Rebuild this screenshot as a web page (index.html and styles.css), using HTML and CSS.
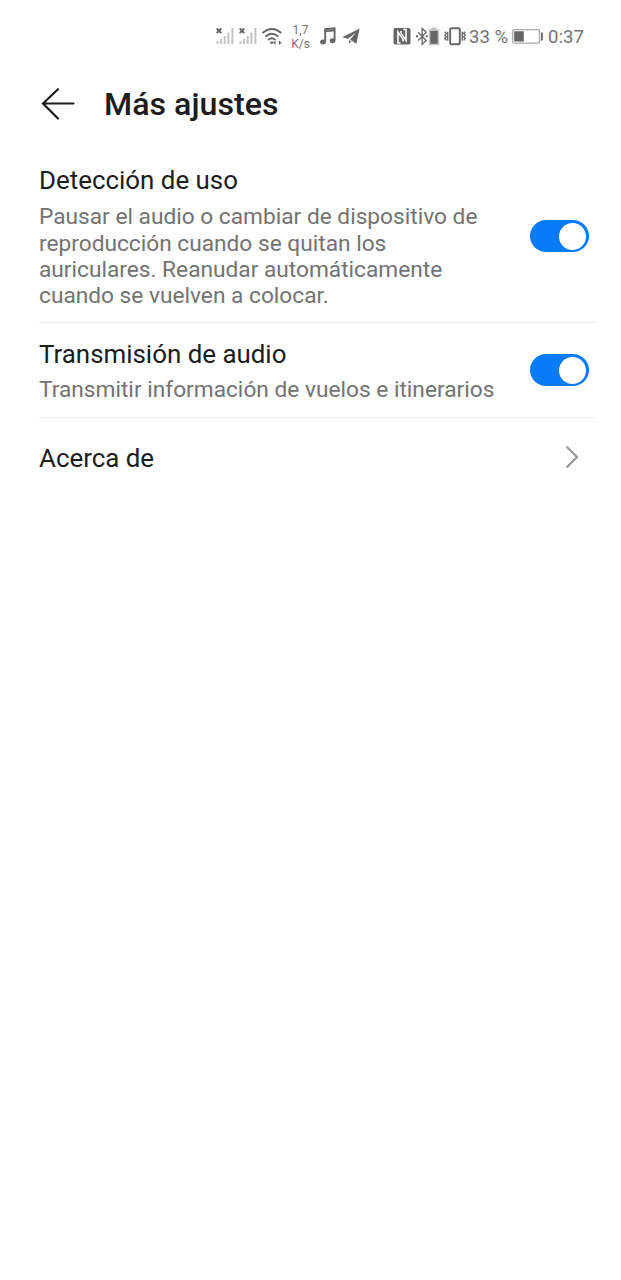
FILE: index.html
```html
<!DOCTYPE html>
<html lang="es">
<head>
  <meta charset="UTF-8">
  <meta name="viewport" content="width=device-width, initial-scale=1.0">
  <title>Más ajustes</title>
  <link rel="stylesheet" href="styles.css">
</head>
<body>
  <div class="status-bar">
    <svg class="signal" width="18" height="20" viewBox="0 0 18 20">
      <path class="cross" d="M0.7 1.5l4.6 4.6M5.3 1.5L0.7 6.1"/>
      <path class="bars" d="M1.5 14v3M5 12v5M8.7 9v8M12.4 5.5V17M16.4 1v16"/>
    </svg>
    <svg class="signal" width="18" height="20" viewBox="0 0 18 20">
      <path class="cross" d="M0.7 1.5l4.6 4.6M5.3 1.5L0.7 6.1"/>
      <path class="bars" d="M1.5 14v3M5 12v5M8.7 9v8M12.4 5.5V17M16.4 1v16"/>
    </svg>
    <svg class="wifi" width="21" height="20" viewBox="0 0 21 20">
      <path class="line" d="M.5 6Q9.8-2.2 19.3 6M3.4 9.6Q9.8 3.8 16.3 9.6M6.2 13Q9.8 9.6 13.5 13"/>
      <path class="fill" d="M7.3 14.8h5L9.8 17.6zM13.6 13.5v4.4l-2-2.2zM17 13.5v4.4l2.5-2.2z"/>
    </svg>
    <div class="speed"><span>1,7</span><span>K/s</span></div>
    <svg class="music" width="16" height="20" viewBox="0 0 16 20">
      <path class="line" d="M5.2 14.5V2.2l9.4-1V13.5M5.2 4.4l9.4-1"/>
      <ellipse class="fill" cx="3" cy="15" rx="2.9" ry="2.5"/>
      <ellipse class="fill" cx="12.5" cy="13.8" rx="2.8" ry="2.5"/>
    </svg>
    <svg class="plane" width="18" height="20" viewBox="0 0 18 20">
      <path class="fill" d="M17.6 1.5L0.3 10.3l5.5 1.5L14 5.7 8 12.4l6.4 4.4zM7 13l2.4 1.5L7 16.6z"/>
    </svg>
    <svg class="nfc" width="18" height="20" viewBox="0 0 18 20">
      <rect class="fill" x=".5" y="1" width="17" height="16.5" rx="1.8"/>
      <path class="gap" d="M7.6 16H5V5l5 7.4v2.2M10.4 2.5H13v11L8 6.1V4"/>
    </svg>
    <svg class="bluetooth" width="24" height="20" viewBox="0 0 24 20">
      <path class="thin" d="M2.2 5.2l8 8.2-4 3.8V1.5l4 3.8-8 8.1"/>
      <path class="fill" d="M0 8.3h2v2H0zM9.8 8.3h2v2h-2z"/>
      <path class="pale" d="M12.8 2.2h2.8V.6h4.8v1.6h2.8v16.1H12.8z"/>
      <path class="fill" d="M14.3 3.9h7.4v12.8h-7.4z"/>
    </svg>
    <svg class="vibrate" width="22" height="20" viewBox="0 0 22 20">
      <rect class="line" x="6.2" y="1.3" width="9.6" height="16" rx="1"/>
      <path class="thin" d="M.8 4.8l1.5 1.6L.8 8.1l1.5 1.7-1.5 1.7 1.5 1.8M3.7 4.8v9M21.2 4.8l-1.5 1.6 1.5 1.7-1.5 1.7 1.5 1.7-1.5 1.8M18.3 4.8v9"/>
    </svg>
    <span class="percent">33 %</span>
    <svg class="battery" width="31" height="20" viewBox="0 0 31 20">
      <rect class="outline" x=".7" y="2.6" width="26.8" height="13.6" rx="1.6"/>
      <path class="fill" d="M2.2 4.2h9.6v10.4H2.2zM29 5.4h1.8v8H29z"/>
    </svg>
    <span class="clock">0:37</span>
  </div>

  <div class="header">
    <svg width="34" height="34" viewBox="0 0 34 34">
      <path d="M17 2.2L2 16.5l15 15M2 16.5h30.5"/>
    </svg>
    <h1>Más ajustes</h1>
  </div>

  <div class="settings">
    <div class="item usage">
      <div class="item-text">
        <h2>Detección de uso</h2>
        <p>Pausar el audio o cambiar de dispositivo de reproducción cuando se quitan los auriculares. Reanudar automáticamente cuando se vuelven a colocar.</p>
      </div>
      <div class="toggle"><div class="knob"></div></div>
    </div>
    <div class="item audio">
      <div class="item-text">
        <h2>Transmisión de audio</h2>
        <p>Transmitir información de vuelos e itinerarios</p>
      </div>
      <div class="toggle"><div class="knob"></div></div>
    </div>
    <div class="item about">
      <h2>Acerca de</h2>
      <svg width="14" height="24" viewBox="0 0 14 24">
        <path d="M1.5 1.5L12 12 1.5 22.5"/>
      </svg>
    </div>
  </div>
</body>
</html>
```
FILE: styles.css
```css
* {
  box-sizing: border-box;
}
body {
  margin: 0;
  min-height: 100vh;
  background-color: #fefefe;
  font-family: Roboto, Arial, sans-serif;
  color: #1c1c1c;
}
h1, h2, p {
  margin: 0;
}
svg {
  display: block;
  flex: none;
  fill: none;
}

/* Status bar */
.status-bar {
  display: flex;
  align-items: center;
  height: 74px;
  padding-left: 216px;
  color: #757575;
  font-size: 18.6px;
  white-space: nowrap;
}
.signal {
  margin-right: 5px;
}
.wifi {
  margin-right: 8px;
}
.speed {
  display: flex;
  flex-direction: column;
  align-items: center;
  width: 19px;
  margin-right: 10px;
  font-size: 12px;
  line-height: 14px;
}
.music {
  margin-right: 6px;
}
.plane {
  margin-right: 33px;
}
.nfc {
  margin-right: 5px;
}
.bluetooth {
  margin-right: 4px;
}
.vibrate {
  margin-right: 3px;
}
.percent {
  width: 43px;
}
.battery {
  margin-right: 5px;
}
.fill {
  fill: #666;
}
.pale {
  fill: #c4c4c4;
}
.line {
  stroke: #666;
  stroke-width: 1.9;
}
.thin {
  stroke: #6c6c6c;
  stroke-width: 1.4;
}
.gap {
  stroke: #fefefe;
  stroke-width: 1.6;
}
.cross {
  stroke: #666;
  stroke-width: 2;
}
.bars {
  stroke: #c4c4c4;
  stroke-width: 2;
}
.outline {
  stroke: #aaa;
  stroke-width: 1.3;
}

/* Header */
.header {
  display: flex;
  align-items: center;
  height: 60px;
  padding-left: 41px;
}
.header svg {
  margin-right: 29px;
  stroke: #1c1c1c;
  stroke-width: 2.2;
  stroke-linecap: round;
}
.header h1 {
  font-size: 32.2px;
  font-weight: 500;
  line-height: 38px;
}

/* Settings list */
.settings {
  padding: 15px 26px 0 39px;
}
.item {
  display: flex;
  justify-content: space-between;
}
.item h2 {
  font-size: 25.9px;
  font-weight: 400;
  line-height: 32px;
}
.item p {
  width: 465px;
  padding-top: 7px;
  color: #737373;
  font-size: 22.7px;
  line-height: 26.4px;
}
.usage,
.audio {
  align-items: center;
  padding-right: 6px;
  border-bottom: 1px solid #ebebeb;
}
.usage {
  height: 174px;
  padding-top: 15px;
  padding-bottom: 12px;
}
.usage p {
  padding-top: 8px;
}
.audio {
  height: 95px;
  padding-top: 2px;
}
.about {
  align-items: center;
  height: 80px;
  padding-right: 16px;
}
.about svg {
  margin-bottom: 2px;
  stroke: #999;
  stroke-width: 2.2;
}
.toggle {
  display: flex;
  flex: none;
  align-items: center;
  justify-content: flex-end;
  width: 59px;
  height: 32px;
  margin-bottom: 2px;
  padding-right: 3px;
  border-radius: 16px;
  background-color: #087cf8;
}
.knob {
  width: 27px;
  height: 27px;
  border-radius: 50%;
  background-color: #fff;
}
```
